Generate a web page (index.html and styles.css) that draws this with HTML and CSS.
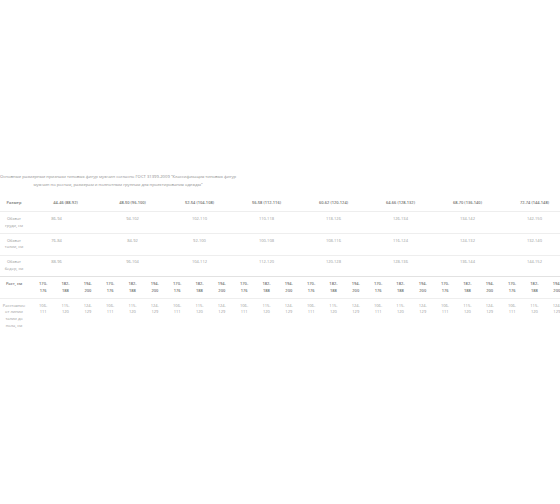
FILE: index.html
```html
<!DOCTYPE html>
<html lang="ru">
<head>
<meta charset="utf-8">
<title>Размеры</title>
<link rel="stylesheet" href="styles.css">
</head>
<body>
<div class="page">
  <div class="caption">Основные размерные признаки типовых фигур мужчин согласно ГОСТ 31399-2009 "Классификация типовых фигур<br>мужчин по ростам, размерам и полнотным группам для проектирования одежды"</div>
  <table class="sizes">
    <colgroup>
      <col class="c-label">
      <col class="c-sub"><col class="c-sub"><col class="c-sub">
      <col class="c-sub"><col class="c-sub"><col class="c-sub">
      <col class="c-sub"><col class="c-sub"><col class="c-sub">
      <col class="c-sub"><col class="c-sub"><col class="c-sub">
      <col class="c-sub"><col class="c-sub"><col class="c-sub">
      <col class="c-sub"><col class="c-sub"><col class="c-sub">
      <col class="c-sub"><col class="c-sub"><col class="c-sub">
      <col class="c-sub"><col class="c-sub"><col class="c-sub">
    </colgroup>
    <tr class="head">
      <th class="label">Размер</th>
      <th colspan="3">44-46 (88-92)</th>
      <th colspan="3">48-50 (96-100)</th>
      <th colspan="3">52-54 (104-108)</th>
      <th colspan="3">56-58 (112-116)</th>
      <th colspan="3">60-62 (120-124)</th>
      <th colspan="3">64-66 (128-132)</th>
      <th colspan="3">68-70 (136-140)</th>
      <th colspan="3">72-74 (144-148)</th>
    </tr>
    <tr>
      <td class="label">Обхват груди, см</td>
      <td colspan="3" class="first">86-94</td>
      <td colspan="3">94-102</td>
      <td colspan="3">102-110</td>
      <td colspan="3">110-118</td>
      <td colspan="3">118-126</td>
      <td colspan="3">126-134</td>
      <td colspan="3">134-142</td>
      <td colspan="3">142-150</td>
    </tr>
    <tr>
      <td class="label">Обхват талии, см</td>
      <td colspan="3" class="first">76-84</td>
      <td colspan="3">84-92</td>
      <td colspan="3">92-100</td>
      <td colspan="3">100-108</td>
      <td colspan="3">108-116</td>
      <td colspan="3">116-124</td>
      <td colspan="3">124-132</td>
      <td colspan="3">132-140</td>
    </tr>
    <tr class="last-girth">
      <td class="label">Обхват бедер, см</td>
      <td colspan="3" class="first">88-96</td>
      <td colspan="3">96-104</td>
      <td colspan="3">104-112</td>
      <td colspan="3">112-120</td>
      <td colspan="3">120-128</td>
      <td colspan="3">128-136</td>
      <td colspan="3">136-144</td>
      <td colspan="3">144-152</td>
    </tr>
    <tr class="height">
      <th class="label">Рост, см</th>
      <th>170-176</th><th>182-188</th><th>194-200</th>
      <th>170-176</th><th>182-188</th><th>194-200</th>
      <th>170-176</th><th>182-188</th><th>194-200</th>
      <th>170-176</th><th>182-188</th><th>194-200</th>
      <th>170-176</th><th>182-188</th><th>194-200</th>
      <th>170-176</th><th>182-188</th><th>194-200</th>
      <th>170-176</th><th>182-188</th><th>194-200</th>
      <th>170-176</th><th>182-188</th><th>194-200</th>
    </tr>
    <tr class="waist">
      <td class="label">Расстояние от линии талии до пола, см</td>
      <td>106-111</td><td>115-120</td><td>124-129</td>
      <td>106-111</td><td>115-120</td><td>124-129</td>
      <td>106-111</td><td>115-120</td><td>124-129</td>
      <td>106-111</td><td>115-120</td><td>124-129</td>
      <td>106-111</td><td>115-120</td><td>124-129</td>
      <td>106-111</td><td>115-120</td><td>124-129</td>
      <td>106-111</td><td>115-120</td><td>124-129</td>
      <td>106-111</td><td>115-120</td><td>124-129</td>
    </tr>
  </table>
</div>
</body>
</html>
```
FILE: styles.css
```css
html, body {
  margin: 0;
  padding: 0;
  background: #ffffff;
  overflow: hidden;
}
body {
  font-family: "Open Sans", "Liberation Sans", sans-serif;
  width: 560px;
  height: 504px;
  -webkit-font-smoothing: antialiased;
}
.page {
  padding-top: 172.7px;
  width: 600px;
}
.caption {
  width: 236px;
  text-align: center;
  font-size: 4.2px;
  line-height: 8px;
  color: #8c8c8c;
  white-space: nowrap;
}
.sizes {
  margin-top: 7px;
  border-collapse: collapse;
  table-layout: fixed;
  width: 568px;
}
.c-label { width: 32px; }
.c-sub { width: 22.333px; }
.sizes th, .sizes td {
  font-size: 4px;
  line-height: 6.67px;
  padding: 3.7px 4px;
  text-align: center;
  vertical-align: top;
  border-bottom: 1px solid #eeeeee;
}
.sizes td {
  color: #999999;
  font-weight: 400;
}
.sizes th {
  color: #747474;
  font-weight: 600;
}
.sizes .head th {
  padding-top: 4.4px;
  padding-bottom: 4.4px;
}
.sizes .label {
  padding-left: 1px;
  padding-right: 5px;
}
.sizes td.first {
  padding-right: 22px;
}
.last-girth td {
  border-bottom: 1px solid #e2e2e2;
}
.waist td {
  border-bottom: none;
}
```
